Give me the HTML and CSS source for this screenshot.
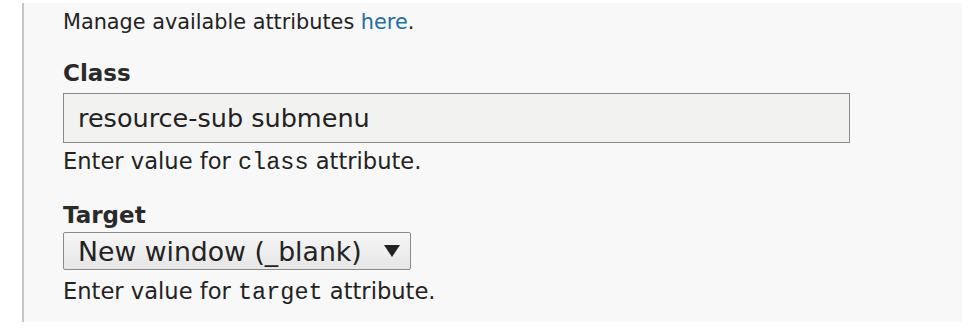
FILE: index.html
```html
<!DOCTYPE html>
<html lang="en">
<head>
  <meta charset="UTF-8" />
  <title>Menu attributes</title>
  <link rel="stylesheet" href="styles.css">
</head>
<body>
  <div class="panel">
    <p class="intro">Manage available attributes <a href="#">here</a>.</p>

    <div class="field">
      <label for="cls">Class</label>
      <input id="cls" class="text-input" type="text" value="resource-sub submenu">
      <div class="desc">Enter value for <code>class</code> attribute.</div>
    </div>

    <div class="field">
      <label for="tgt">Target</label>
      <div class="select">
        <span>New window (_blank)</span>
        <span class="arrow"></span>
      </div>
      <div class="desc">Enter value for <code>target</code> attribute.</div>
    </div>
  </div>
</body>
</html>
```

FILE: styles.css
```css
body {
  margin: 0;
  background: #fff;
  font-family: "DejaVu Sans", sans-serif;
  color: #222;
}

.panel {
  margin: 3px 14px 8px 22px;
  height: 319px;
  box-sizing: border-box;
  border-left: 2px solid #c6c6c6;
  background: #f8f8f8;
  padding: 7px 0 0 39px;
}

.intro {
  margin: 0;
  font-size: 20.8px;
  line-height: 24px;
}

.intro a {
  color: #1c6ea4;
  text-decoration: none;
}

.field {
  margin-top: 25px;
}

.field + .field {
  margin-top: 25px;
}

label {
  display: block;
  font-weight: bold;
  font-size: 23px;
  line-height: 28px;
  color: #2a2a2a;
}

.text-input {
  display: block;
  box-sizing: border-box;
  width: 787px;
  height: 50px;
  margin-top: 6px;
  padding: 0 14px;
  border: 1px solid #8a8a8a;
  background: #f2f2f0;
  font-family: "DejaVu Sans", sans-serif;
  font-size: 25.5px;
  color: #222;
}

.select {
  display: flex;
  align-items: center;
  justify-content: space-between;
  box-sizing: border-box;
  width: 348px;
  height: 38px;
  margin-top: 3px;
  padding: 0 10px 0 14px;
  border: 1px solid #8a8a8a;
  border-radius: 2px;
  background: linear-gradient(#f6f6f6, #e6e6e6);
  font-size: 26.7px;
  color: #222;
}

.arrow {
  width: 0;
  height: 0;
  border-left: 8px solid transparent;
  border-right: 8px solid transparent;
  border-top: 12px solid #222;
}

.desc {
  margin-top: 5px;
  font-size: 22.6px;
  line-height: 26px;
}

.select + .desc {
  margin-top: 8px;
}

code {
  font-family: "Liberation Mono", monospace;
  font-size: 23.5px;
}
```
